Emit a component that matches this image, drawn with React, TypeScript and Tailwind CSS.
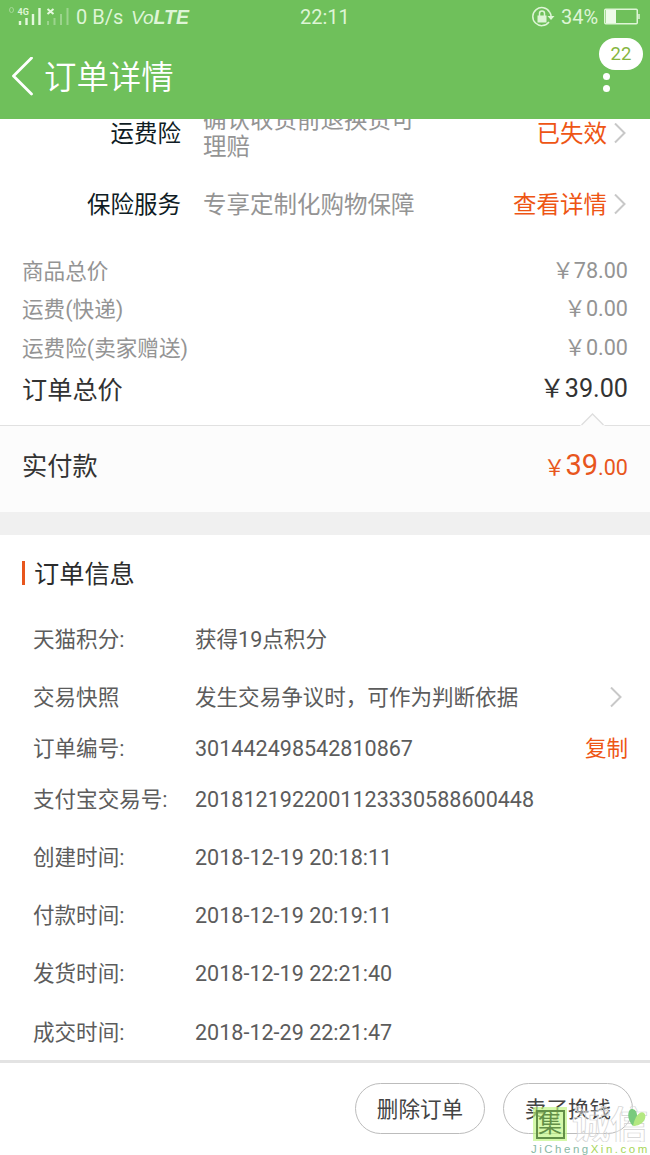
import type { ReactNode } from 'react';

const font = "font-['Roboto','Noto_Sans_CJK_SC',sans-serif]";

function Chevron() {
  return (
    <svg width="12" height="22" viewBox="0 0 12 22" fill="none" stroke="#c8c8c8" strokeWidth="2">
      <path d="M1 0.500 L10.500 10 L1 19.500" />
    </svg>
  );
}

function StatusBar() {
  return (
    <div className="flex h-[34px] items-center text-[20px] leading-none text-[#def5d6]">
      <svg width="76" height="34" viewBox="0 0 76 34" fill="none">
        <ellipse cx="11.500" cy="10" rx="2" ry="2.500" stroke="#a5d898" strokeWidth="1" />
        <text x="17.500" y="14.500" fontSize="9" fontWeight="700" fill="#def5d6">4G</text>
        <path d="M20 21v4M26.500 18v7M33 14v11M39.500 8v17" stroke="#e4f8dd" strokeWidth="2.400" />
        <path d="M47.500 9l6 5M53.500 9l-6 5" stroke="#e4f8dd" strokeWidth="2" />
        <path d="M48 21v4M54.500 18v7M61 14v11M67.500 8v17" stroke="#9cd48d" strokeWidth="2" />
      </svg>
      <div className="w-[55px] whitespace-nowrap">0 B/s</div>
      <div className="w-[169px] pt-[2px] font-['Liberation_Sans',sans-serif] text-[19px] italic">
        Vo<span className="text-[19.500px] font-black">LTE</span>
      </div>
      <div className="w-[231px]">22:11</div>
      <svg width="24" height="22" viewBox="0 0 24 22" fill="none" stroke="#def5d6">
        <path d="M18.500 6A9 9 0 1 0 18 16" strokeWidth="1.500" />
        <path d="M18.500 6Q20 8 20 10" strokeWidth="1.500" />
        <path d="M16.500 10h7L20 14z" fill="#def5d6" stroke="none" />
        <path d="M6.500 9.500h9v7h-9z" fill="#def5d6" stroke="none" />
        <path d="M8.500 10V7.500a2.500 2.500 0 0 1 5 0V10" strokeWidth="1.500" />
      </svg>
      <div className="ml-[6px] w-[43px]">34%</div>
      <svg width="37" height="18" viewBox="0 0 37 18" fill="none">
        <rect x="0.750" y="1.250" width="32.500" height="14.500" rx="1" stroke="#def5d6" strokeWidth="1.500" />
        <rect x="2" y="2" width="10" height="13" fill="#eefbe9" />
        <path d="M35 6v5" stroke="#def5d6" strokeWidth="1.500" />
      </svg>
    </div>
  );
}

function Header() {
  return (
    <header className="h-[119px] shrink-0 bg-[#6fc05b]">
      <StatusBar />
      <div className="flex h-[85px] items-center pl-[11px] pr-[7px]">
        <svg width="23" height="40" viewBox="0 0 23 40" fill="none" stroke="#fff" strokeWidth="2.800" strokeLinecap="round" strokeLinejoin="round">
          <path d="M20.500 1 L2.500 19 L20.500 37" />
        </svg>
        <h1 className="ml-[10px] flex-1 pt-[3px] text-[32.400px] font-[350] leading-none text-white">订单详情</h1>
        <div className="flex h-[77px] w-[44px] flex-col">
          <div className="flex h-8 items-center justify-center rounded-full bg-white pt-[2px] text-[18.500px] text-[#86b540]">22</div>
          <div className="ml-[4px] mt-[3px] flex flex-col gap-[5px]">
            <i className="size-[7px] rounded-full bg-white" />
            <i className="size-[7px] rounded-full bg-white" />
          </div>
        </div>
      </div>
    </header>
  );
}

function ServiceRow({ label, desc, action, box }: { label: string; desc: ReactNode; action: string; box: string }) {
  return (
    <div className={`flex items-center pr-[24px] text-[23.500px] leading-[27px] ${box}`}>
      <div className="w-[181px] text-right text-[#0f1c24]">{label}</div>
      <div className="ml-[22px] flex-1 whitespace-nowrap text-[#949494]">{desc}</div>
      <div className="mr-[7px] text-[#ee5514]">{action}</div>
      <Chevron />
    </div>
  );
}

function PriceRow({ label, price }: { label: string; price: string }) {
  return (
    <div className="flex h-[38.500px] items-center justify-between text-[21.600px] leading-none text-[#949494]">
      <span className="pt-[3px]">{label}</span>
      <span className="pt-px">{price}</span>
    </div>
  );
}

function InfoRow({ label, value, box, children }: { label: string; value: string; box: string; children?: ReactNode }) {
  return (
    <div className={`flex items-center pl-[33px] pr-[22px] leading-none ${box}`}>
      <span className="w-[162px] whitespace-nowrap">{label}</span>
      <span className="flex-1 whitespace-nowrap">{value}</span>
      {children}
    </div>
  );
}

function Watermark() {
  return (
    <div className="absolute left-[530px] top-[1106px] w-[120px]">
      <div className="flex h-[36px] items-center">
        <div className="ml-[3px] flex size-[34px] items-center justify-center bg-[#bdf47c]/65">
          <div className="flex size-[29px] items-center justify-center border-2 border-[#638f48] text-[24px] leading-none text-[#638f48]">集</div>
        </div>
        <svg width="82" height="36" viewBox="0 0 82 36">
          <text x="5" y="32" fontSize="38" fontWeight="700" fill="#ffffff" fillOpacity="0.4" stroke="#d2d2d2" strokeWidth="0.700">诚信</text>
          <path d="M66 20C60 14 60 5 64 3C70 2 73 11 66 20z" fill="#79ca7d" />
          <path d="M66 20C68 9 74 4 77 7C81 11 76 20 66 20z" fill="#b3e881" />
        </svg>
      </div>
      <div className="mt-[1px] pl-px font-['Liberation_Sans',sans-serif] text-[11.500px] leading-[12px] tracking-[2.500px] text-[#87b9a5]">
        JiCheng<span className="text-[#a7d65a]">Xin.com</span>
      </div>
    </div>
  );
}

export default function App() {
  const button =
    'flex h-[51px] w-[130px] items-center justify-center rounded-full border border-[#bcbcbc] pt-[2px] text-[21.600px] leading-none text-[#444]';
  return (
    <div className={`relative flex h-[1155px] w-[650px] flex-col overflow-hidden bg-white font-[380] ${font}`}>
      <Header />
      <main className="h-[941px] shrink-0 overflow-hidden">
        <ServiceRow
          label="运费险"
          desc={<>确认收货前退换货可<br />理赔</>}
          action="已失效"
          box="-mt-[19px] h-[68px]"
        />
        <ServiceRow label="保险服务" desc="专享定制化购物保障" action="查看详情" box="h-[74px]" />

        <section className="h-[183px] px-[22px] pt-[9px]">
          <PriceRow label="商品总价" price="￥78.00" />
          <PriceRow label="运费(快递)" price="￥0.00" />
          <PriceRow label="运费险(卖家赠送)" price="￥0.00" />
          <div className="flex h-[43px] items-center justify-between text-[25.200px] leading-none text-[#333]">
            <span className="pt-[5px]">订单总价</span>
            <span className="pt-[2px]">￥39.00</span>
          </div>
          <svg className="relative ml-auto mr-[22px]" width="26" height="16" viewBox="0 0 26 16" fill="none">
            <path d="M0 16 L12.500 3.500 L25 16z" fill="#fcfcfc" />
            <path d="M1.500 15 L12.500 4 L23.500 15" stroke="#dedede" strokeWidth="1.300" />
          </svg>
        </section>

        <section className="flex h-[87px] items-center justify-between border-t border-[#e1e1e1] bg-[#fcfcfc] px-[22px] pb-[6px] leading-none">
          <span className="pt-[2px] text-[25.200px] text-[#333]">实付款</span>
          <span className="pb-px text-[21.600px] text-[#e8561d]">
            ￥<span className="text-[29px]">39</span>.00
          </span>
        </section>
        <div className="h-[23px] bg-[#f0f0f0]" />

        <section className="text-[21.550px] text-[#5c5c5c]">
          <div className="flex h-[75px] items-center pl-[22px] text-[25.200px] leading-none text-[#2c2c2c]">
            <i className="mr-[9px] mt-px h-[24px] w-[3px] bg-[#e8561d]" />
            <span className="pt-[5px]">订单信息</span>
          </div>
          <InfoRow label="天猫积分:" value="获得19点积分" box="h-[59px]" />
          <InfoRow label="交易快照" value="发生交易争议时，可作为判断依据" box="h-[57px]">
            <span className="mr-[6px]"><Chevron /></span>
          </InfoRow>
          <InfoRow label="订单编号:" value="301442498542810867" box="h-[45px]">
            <span className="text-[#ee5514]">复制</span>
          </InfoRow>
          <InfoRow label="支付宝交易号:" value="2018121922001123330588600448" box="h-[57px]" />
          <InfoRow label="创建时间:" value="2018-12-19 20:18:11" box="h-[59px]" />
          <InfoRow label="付款时间:" value="2018-12-19 20:19:11" box="h-[58px]" />
          <InfoRow label="发货时间:" value="2018-12-19 22:21:40" box="h-[58px]" />
          <InfoRow label="成交时间:" value="2018-12-29 22:21:47" box="h-[59px]" />
        </section>
      </main>
      <footer className="flex h-[95px] shrink-0 items-start justify-end gap-[18px] border-t-[3px] border-[#e3e3e3] bg-white pr-[17px] pt-[20px]">
        <button className={button}>删除订单</button>
        <button className={button}>卖了换钱</button>
      </footer>
      <Watermark />
    </div>
  );
}
